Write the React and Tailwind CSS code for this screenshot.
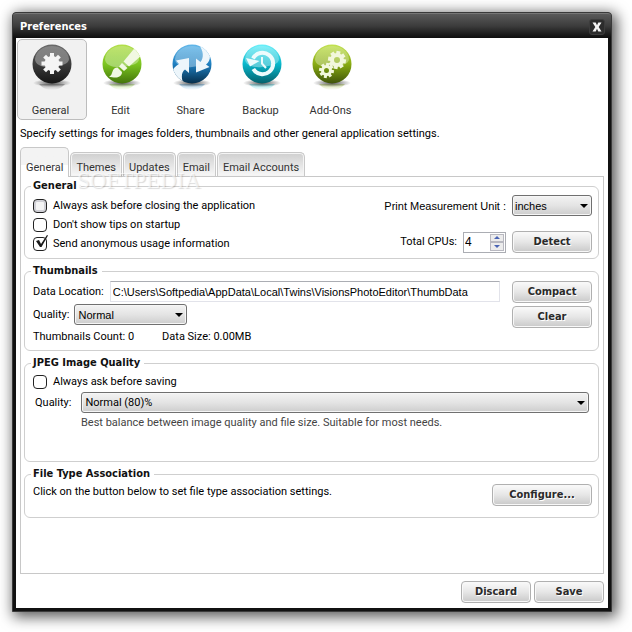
import { useState } from "react";

const TABS = ["General", "Themes", "Updates", "Email", "Email Accounts"];

// Glossy ball with a ground shadow, shared by all toolbar icons
const Orb = ({ id, light, mid, dark, children }) => (
  <svg width="44" height="50" viewBox="0 0 44 50" aria-hidden="true">
    <defs>
      <linearGradient id={`${id}-body`} x1="0" y1="0" x2="0" y2="1">
        <stop offset="0" stopColor={light} />
        <stop offset="0.5" stopColor={mid} />
        <stop offset="1" stopColor={dark} />
      </linearGradient>
      <linearGradient id={`${id}-gloss`} x1="0" y1="0" x2="0" y2="1">
        <stop offset="0" stopColor="#fff" stopOpacity="0.2" />
        <stop offset="1" stopColor="#fff" stopOpacity="0.36" />
      </linearGradient>
      <radialGradient id={`${id}-shade`}>
        <stop offset="0" stopColor="#000" stopOpacity="0.65" />
        <stop offset="1" stopColor="#000" stopOpacity="0" />
      </radialGradient>
      <linearGradient id={`${id}-echo`} x1="0" y1="0" x2="0" y2="1">
        <stop offset="0" stopColor={mid} stopOpacity="0.4" />
        <stop offset="1" stopColor={mid} stopOpacity="0" />
      </linearGradient>
      <clipPath id={`${id}-clip`}>
        <circle cx="22" cy="21" r="19.5" />
      </clipPath>
    </defs>
    <path d="M9 41h26q-5 6-13 6t-13-6z" fill={`url(#${id}-echo)`} />
    <ellipse cx="22" cy="40" rx="19" ry="4" fill={`url(#${id}-shade)`} />
    <circle cx="22" cy="21" r="19.5" fill={`url(#${id}-body)`} />
    <g clipPath={`url(#${id}-clip)`}>
      <path
        d="M5 16C6 7 14 3 22 3s16 4 17 13c0 5-8 7-17 8-9 1-17-2-17-8z"
        fill={`url(#${id}-gloss)`}
      />
      {children}
    </g>
  </svg>
);

const GeneralIcon = () => (
  <Orb id="general" light="#6a6a6a" mid="#3c3c3c" dark="#161616">
    <g fill="#f4f4f4">
      <circle cx="22" cy="20.500" r="7.500" />
      {[0, 45, 90, 135].map((angle) => (
        <rect
          key={angle}
          x="20"
          y="10"
          width="4"
          height="21"
          transform={`rotate(${angle} 22 20.500)`}
        />
      ))}
    </g>
  </Orb>
);

const EditIcon = () => (
  <Orb id="edit" light="#b4e04c" mid="#7cc520" dark="#43750a">
    <g fill="#f1f8e2">
      <path d="M35.500 4L42 12 29 23.500l-5.500-5z" />
      <path d="M22 20l5.500 5-3.500 3-5-4.500z" />
      <path d="M17.500 24.500l4.500 4.500c0 4-3.500 5.500-6.500 5.500-2.500 0-4-.5-6.500-.5 2.500-1.500 2.500-3 3.500-5.500.8-2.500 2.500-4 5-4z" />
    </g>
  </Orb>
);

const ShareIcon = () => (
  <Orb id="share" light="#63b8ea" mid="#1e7fc0" dark="#062f4c">
    <g fill="#edf6fb">
      <path d="M6 17.500L19 15v15l-4-3.500c-4 3-4 9-1 15-6-1-11-7-12-13 1-3 4-6 7-7.500z" />
      <path d="M26 15.500l4.500 3.500c3.500-4.500 3-11-1.500-17 6 1 10 6 11 11 0 4-1.500 6.500-4 8.500l3.500 2.500L26 29.500z" />
    </g>
  </Orb>
);

const BackupIcon = () => (
  <Orb id="backup" light="#6bf0fa" mid="#08b7cb" dark="#05606c">
    <path
      d="M13 15.500A10.700 10.700 0 1 1 13.300 26"
      fill="none"
      stroke="#edfbfc"
      strokeWidth="4"
    />
    <path d="M6 15l4 8.500 9.500-5.500z" fill="#edfbfc" />
    <path
      d="M22 14v6.500l4 4.500"
      fill="none"
      stroke="#edfbfc"
      strokeWidth="2"
    />
  </Orb>
);

const Gear = ({ cx, cy, r, hole, tooth }) => (
  <g>
    <circle
      cx={cx}
      cy={cy}
      r={(r + hole) / 2}
      fill="none"
      stroke="#f2f7dc"
      strokeWidth={r - hole}
    />
    {[0, 45, 90, 135, 180, 225, 270, 315].map((angle) => (
      <rect
        key={angle}
        x={cx - tooth / 2}
        y={cy - r - 2}
        width={tooth}
        height="3"
        fill="#f2f7dc"
        transform={`rotate(${angle + 10} ${cx} ${cy})`}
      />
    ))}
  </g>
);

const AddOnsIcon = () => (
  <Orb id="addons" light="#c3e352" mid="#88ab12" dark="#40540a">
    <Gear cx={27} cy={17} r={7} hole={3} tooth={4} />
    <Gear cx={16.500} cy={27.500} r={5.500} hole={2.500} tooth={3} />
  </Orb>
);

const SECTIONS = [
  { name: "General", Icon: GeneralIcon },
  { name: "Edit", Icon: EditIcon },
  { name: "Share", Icon: ShareIcon },
  { name: "Backup", Icon: BackupIcon },
  { name: "Add-Ons", Icon: AddOnsIcon },
];

const Group = ({ title, className = "", children }) => (
  <fieldset
    className={`rounded-md border border-[#cfcfcf] pl-2 pr-1.5 ${className}`}
  >
    <legend className="-ml-0.5 pl-0.5 pr-1 font-['DejaVu_Sans_Condensed','DejaVu_Sans',sans-serif] leading-4 font-bold text-[#111]">
      {title}
    </legend>
    {children}
  </fieldset>
);

const Checkbox = ({ label, checked, onChange, hot }) => (
  <label className="flex h-[19px] items-center gap-1.5">
    <span className="relative flex">
      <input
        type="checkbox"
        checked={checked}
        onChange={(e) => onChange(e.target.checked)}
        className={`size-3.5 appearance-none rounded-[4px] border border-[#222] ${
          hot ? "bg-[#f4f4f4] inset-ring-2 inset-ring-[#d0d0d6]" : "bg-white"
        }`}
      />
      {checked && (
        <svg
          className="pointer-events-none absolute -top-1 left-0.5"
          width="14"
          height="16"
          viewBox="0 0 14 16"
        >
          <path d="M1 8l3-1 2 4L12 2l1 .5L6.500 14H5z" fill="#1a1a1a" />
        </svg>
      )}
    </span>
    {label}
  </label>
);

const Select = ({ id, options, className = "", textClass = "" }) => (
  <span className={`relative flex ${className}`}>
    <select
      id={id}
      className={`h-[21px] w-full appearance-none rounded-[3px] border border-[#707070] bg-linear-to-b from-[#f3f3f3] via-[#e4e4e4] via-50% to-[#cdcdcd] pr-5 text-black inset-ring inset-ring-[#f6f6f6] ${textClass}`}
    >
      {options.map((option) => (
        <option key={option}>{option}</option>
      ))}
    </select>
    <svg
      className="pointer-events-none absolute top-[9px] right-1"
      width="8"
      height="4"
      viewBox="0 0 8 4"
    >
      <path d="M0 0h8L4 4z" fill="#000" />
    </svg>
  </span>
);

const Button = ({ className = "w-20", children }) => (
  <button
    type="button"
    className={`h-[22px] rounded-[4px] border border-[#b0b0b0] bg-linear-to-b from-[#fafafa] from-0% via-[#e6e6e6] via-50% to-[#c9c9c9] font-['DejaVu_Sans_Condensed','DejaVu_Sans',sans-serif] font-bold text-[#2a2a2a] inset-ring inset-ring-[#f8f8f8] text-shadow-[1px_1px_0_#fff] ${className}`}
  >
    {children}
  </button>
);

const App = () => {
  const [section, setSection] = useState("General");
  const [tab, setTab] = useState("General");

  // General settings
  const [askOnClose, setAskOnClose] = useState(false);
  const [hideTips, setHideTips] = useState(false);
  const [sendUsage, setSendUsage] = useState(true);
  const [cpus, setCpus] = useState(4);

  // Thumbnails and JPEG settings
  const [location, setLocation] = useState(
    "C:\\Users\\Softpedia\\AppData\\Local\\Twins\\VisionsPhotoEditor\\ThumbData"
  );
  const [askOnSave, setAskOnSave] = useState(false);

  return (
    <div className="flex min-h-screen bg-white pt-3 pr-5 pb-5 pl-3 font-[Roboto,sans-serif] text-[11px] leading-4 text-black">
      <div className="flex flex-1 flex-col rounded-t-[4px] border border-[#3a3a3a] bg-[#111] px-[3px] pb-[3px] shadow-[3px_3px_14px_2px_rgba(0,0,0,0.65)]">
        {/* Title bar */}
        <header className="-mx-[3px] flex h-[25px] items-center justify-between rounded-t-[3px] border-t border-[#777] bg-linear-to-b from-[#5a5a5a] from-0% via-[#3c3c3c] via-50% to-[#0e0e0e] pt-px pr-1.5 pl-[7px]">
          <h1 className="font-['DejaVu_Sans_Condensed','DejaVu_Sans',sans-serif] font-bold text-white">
            Preferences
          </h1>
          <button
            type="button"
            aria-label="Close"
            className="flex size-4 items-center justify-center rounded-[3px] border border-[#3c3c3c] bg-[#2c2c2c]"
          >
            <svg width="10" height="10" viewBox="0 0 10 10">
              <path
                d="M.5.500h3.200L5 3.200 6.300.500h3.200L6.700 5l2.800 4.500H6.300L5 6.800 3.700 9.500H.5L3.300 5z"
                fill="#f4f4f4"
              />
            </svg>
          </button>
        </header>

        <main className="flex flex-1 flex-col bg-white px-1">
          {/* Section toolbar */}
          <nav className="-ml-[3px] flex pt-px">
            {SECTIONS.map(({ name, Icon }) => (
              <button
                key={name}
                type="button"
                onClick={() => setSection(name)}
                className={`flex h-[81px] w-[70px] flex-col items-center justify-between rounded-[5px] border pt-[3px] text-[#333] ${
                  section === name
                    ? "border-[#bdbdbd] bg-[#f1f1f1]"
                    : "border-transparent"
                }`}
              >
                <Icon />
                <span className="pr-[3px]">{name}</span>
              </button>
            ))}
          </nav>
          <p className="pt-1.5 pb-[5px]">
            Specify settings for images folders, thumbnails and other general
            application settings.
          </p>

          {/* Tabs */}
          <div className="flex h-[29px] items-end gap-px" role="tablist">
            {TABS.map((name) => (
              <button
                key={name}
                type="button"
                role="tab"
                aria-selected={tab === name}
                onClick={() => setTab(name)}
                className={
                  tab === name
                    ? "z-10 -mb-px h-[30px] rounded-t-[5px] border border-b-0 border-[#c8c8c8] bg-linear-to-b from-[#f3f3f3] from-60% to-white to-60% px-[5px] pt-2.5 text-[#333]"
                    : "h-6 rounded-t-[5px] border border-b-0 border-[#c8c8c8] bg-linear-to-b from-[#cfcfcf] to-[#f8f8f8] px-[5px] pt-1.5 text-[#333] inset-ring inset-ring-[#f4f4f4]"
                }
              >
                {name}
              </button>
            ))}
          </div>

          <section className="relative flex flex-1 flex-col gap-1 border border-[#c8c8c8] pt-px pr-1 pl-[3px]">
            <Group title="General" className="pb-[5px]">
              <div className="flex justify-between pt-px">
                <div className="pt-px">
                  <Checkbox
                    label="Always ask before closing the application"
                    checked={askOnClose}
                    onChange={setAskOnClose}
                    hot
                  />
                  <Checkbox
                    label="Don't show tips on startup"
                    checked={hideTips}
                    onChange={setHideTips}
                  />
                  <Checkbox
                    label="Send anonymous usage information"
                    checked={sendUsage}
                    onChange={setSendUsage}
                  />
                </div>
                <div className="flex flex-col items-end justify-between">
                  <div className="flex items-center gap-1.5">
                    <label
                      htmlFor="unit"
                      className="font-['Liberation_Sans',sans-serif]"
                    >
                      Print Measurement Unit :
                    </label>
                    <Select
                      id="unit"
                      options={["inches", "centimeters"]}
                      className="w-20"
                      textClass="pl-0.5 font-['Liberation_Sans',sans-serif] text-[11px]"
                    />
                  </div>
                  <div className="flex items-center gap-1.5">
                    <label htmlFor="cpus">Total CPUs:</label>
                    <span className="flex h-[21px] w-[43px] border border-[#abadb3] p-px">
                      <input
                        id="cpus"
                        type="text"
                        value={cpus}
                        onChange={(e) => setCpus(Number(e.target.value) || 0)}
                        className="h-4 min-w-0 flex-1 font-['Liberation_Sans',sans-serif] text-[12px]"
                      />
                      <span className="flex w-3.5 flex-col">
                        <button
                          type="button"
                          aria-label="More CPUs"
                          onClick={() => setCpus(cpus + 1)}
                          className="flex flex-1 items-center justify-center border border-[#b8b8c0] bg-[#ececec]"
                        >
                          <svg width="6" height="3" viewBox="0 0 6 3">
                            <path d="M0 3h6L3 0z" fill="#4a64b4" />
                          </svg>
                        </button>
                        <button
                          type="button"
                          aria-label="Fewer CPUs"
                          onClick={() => setCpus(Math.max(1, cpus - 1))}
                          className="flex flex-1 items-center justify-center border border-[#b8b8c0] bg-[#ececec]"
                        >
                          <svg width="6" height="3" viewBox="0 0 6 3">
                            <path d="M0 0h6L3 3z" fill="#4a64b4" />
                          </svg>
                        </button>
                      </span>
                    </span>
                    <Button>Detect</Button>
                  </div>
                </div>
              </div>
            </Group>

            <Group title="Thumbnails" className="pb-[5px]">
              <div className="flex gap-3 pt-0.5">
                <div className="flex-1">
                  <div className="flex items-center gap-1.5">
                    <label htmlFor="location">Data Location:</label>
                    <input
                      id="location"
                      type="text"
                      value={location}
                      onChange={(e) => setLocation(e.target.value)}
                      className="h-[21px] min-w-0 flex-1 border border-[#e2e3ea] border-t-[#abadb3] px-0.5 font-['Liberation_Sans',sans-serif] text-[11px]"
                    />
                  </div>
                  <div className="flex items-center gap-[5px] pt-0.5">
                    <label htmlFor="thumb-quality">Quality:</label>
                    <Select
                      id="thumb-quality"
                      options={["Normal", "High", "Low"]}
                      className="w-[113px]"
                      textClass="pl-[3px] font-['Liberation_Sans',sans-serif] text-[11px]"
                    />
                  </div>
                  <div className="flex gap-7 pt-1">
                    <span>Thumbnails Count: 0</span>
                    <span>Data Size: 0.00MB</span>
                  </div>
                </div>
                <div className="flex flex-col gap-[3px]">
                  <Button>Compact</Button>
                  <Button>Clear</Button>
                </div>
              </div>
            </Group>

            <Group title="JPEG Image Quality" className="pt-px pb-[30px]">
              <Checkbox
                label="Always ask before saving"
                checked={askOnSave}
                onChange={setAskOnSave}
              />
              <div className="flex items-center gap-2.5 pt-px pr-[3px] pl-0.5">
                <label htmlFor="jpeg-quality">Quality:</label>
                <Select
                  id="jpeg-quality"
                  options={["Normal (80)%", "High (90)%", "Best (100)%"]}
                  className="flex-1"
                  textClass="pl-[3px] text-[11px]"
                />
              </div>
              <p className="pt-0.5 pl-12 text-[#444]">
                Best balance between image quality and file size. Suitable for
                most needs.
              </p>
            </Group>

            <Group title="File Type Association" className="pb-[11px]">
              <div className="flex justify-between pt-0.5">
                <p>
                  Click on the button below to set file type association
                  settings.
                </p>
                <Button className="w-[100px]">Configure...</Button>
              </div>
            </Group>

            {/* Watermark */}
            <div className="pointer-events-none absolute -top-2 left-14 z-20 flex flex-col items-center font-['Liberation_Serif',serif] text-white/60 text-shadow-[1px_1px_1px_rgba(0,0,0,0.15)]">
              <span className="text-[23px] leading-6">SOFTPEDIA</span>
              <span className="pt-1 text-[#9090b0]/20 text-shadow-none">
                www.softpedia.com
              </span>
            </div>
          </section>

          <footer className="flex justify-end gap-[3px] pt-[7px] pb-[5px]">
            <Button className="w-[70px]">Discard</Button>
            <Button className="w-[70px]">Save</Button>
          </footer>
        </main>
      </div>
    </div>
  );
};

export default App;
